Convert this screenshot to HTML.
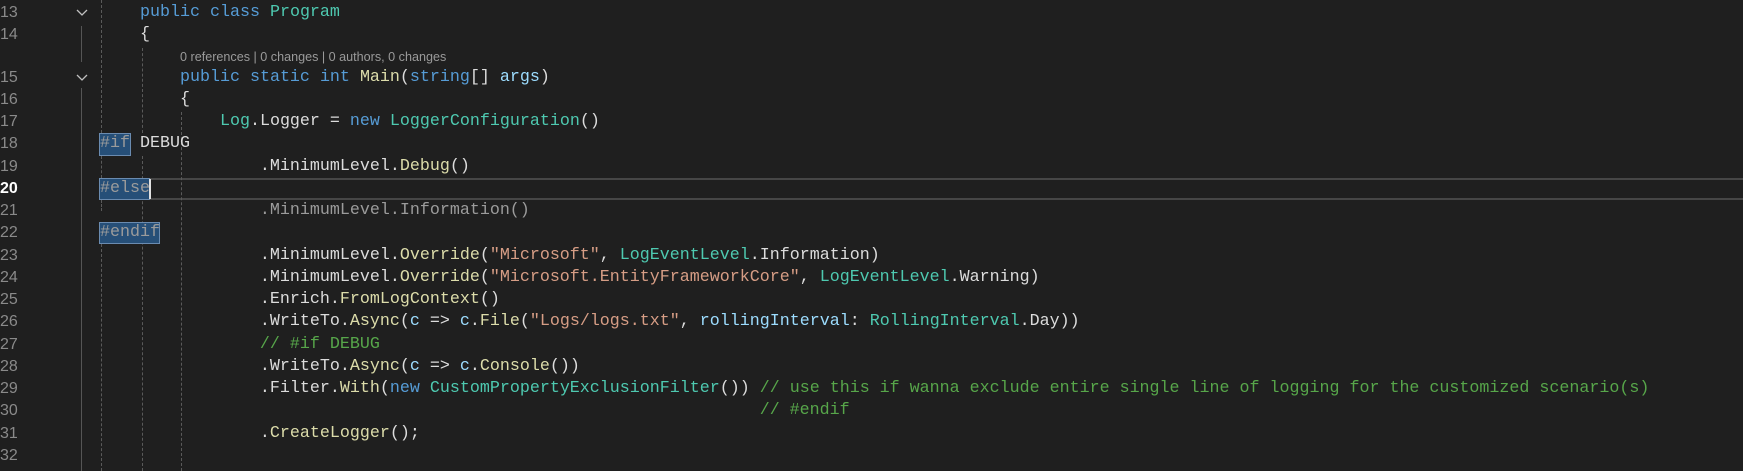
<!DOCTYPE html>
<html><head><meta charset="utf-8"><style>
html,body{margin:0;padding:0;background:#1f1f1f;width:1743px;height:471px;overflow:hidden}
.l{position:absolute;left:100px;height:22.24px;line-height:22.24px;font-family:"Liberation Mono",monospace;font-size:16.67px;color:#dcdcdc;white-space:pre}
.n{position:absolute;width:17px;text-align:right;left:0;height:22.24px;line-height:22.24px;font-family:"Liberation Sans",sans-serif;font-size:16px;color:#8a8a8a}
.k{color:#569cd6}.t{color:#4ec9b0}.m{color:#dcdcaa}.s{color:#d69d85}.c{color:#57a64a}.p{color:#9cdcfe}.g{color:#9b9b9b}
.guide{position:absolute;width:0;border-left:1px dashed #5a5a5a}
.box{position:absolute;background:#264f78;border:1px solid #6a8bb0;box-sizing:border-box}
</style></head><body>
<div style="position:absolute;left:150px;right:0;top:178px;height:22px;border-top:2px solid #464646;border-bottom:2px solid #464646;box-sizing:border-box"></div>
<div style="position:absolute;left:81px;top:26px;height:36px;width:1px;background:#555"></div>
<div style="position:absolute;left:81px;top:88px;height:383px;width:1px;background:#555"></div>
<svg style="position:absolute;left:76px;top:9px" width="12" height="8"><path d="M1 1 L6 6 L11 1" fill="none" stroke="#c0c0c0" stroke-width="1.3"/></svg>
<svg style="position:absolute;left:76px;top:74px" width="12" height="8"><path d="M1 1 L6 6 L11 1" fill="none" stroke="#c0c0c0" stroke-width="1.3"/></svg>
<div class="guide" style="left:101px;top:0;height:133px"></div>
<div class="guide" style="left:101px;top:156px;height:22px"></div>
<div class="guide" style="left:101px;top:200px;height:11px"></div>
<div class="guide" style="left:101px;top:244px;height:227px"></div>
<div class="guide" style="left:142px;top:48px;height:85px"></div>
<div class="guide" style="left:142px;top:156px;height:315px"></div>
<div class="guide" style="left:181px;top:112px;height:359px"></div>
<div class="box" style="left:99px;top:133px;width:32px;height:23px"></div>
<div class="box" style="left:99px;top:178px;width:51px;height:22px"></div>
<div style="position:absolute;left:149px;top:179px;width:2px;height:20px;background:#e0e0e0"></div>
<div class="box" style="left:99px;top:222px;width:61px;height:22px"></div>

<div class="n" style="top:2.2px">13</div>
<div class="n" style="top:24.4px">14</div>
<div class="n" style="top:66.7px">15</div>
<div class="n" style="top:88.9px">16</div>
<div class="n" style="top:111.2px">17</div>
<div class="n" style="top:133.4px">18</div>
<div class="n" style="top:155.6px">19</div>
<div class="n" style="top:177.9px;color:#fff;font-weight:bold">20</div>
<div class="n" style="top:200.1px">21</div>
<div class="n" style="top:222.4px">22</div>
<div class="n" style="top:244.6px">23</div>
<div class="n" style="top:266.8px">24</div>
<div class="n" style="top:289.1px">25</div>
<div class="n" style="top:311.3px">26</div>
<div class="n" style="top:333.6px">27</div>
<div class="n" style="top:355.8px">28</div>
<div class="n" style="top:378px">29</div>
<div class="n" style="top:400.3px">30</div>
<div class="n" style="top:422.5px">31</div>
<div class="n" style="top:444.8px">32</div>

<div class="l" style="top:2.2px">    <span class="k">public</span> <span class="k">class</span> <span class="t">Program</span></div>
<div class="l" style="top:24.4px">    {</div>
<div style="position:absolute;left:180px;top:46.7px;height:20px;line-height:20px;font-family:'Liberation Sans',sans-serif;font-size:12.6px;color:#9a9a9a;white-space:pre">0 references | 0 changes | 0 authors, 0 changes</div>
<div class="l" style="top:66.7px">        <span class="k">public</span> <span class="k">static</span> <span class="k">int</span> <span class="m">Main</span>(<span class="k">string</span>[] <span class="p">args</span>)</div>
<div class="l" style="top:88.9px">        {</div>
<div class="l" style="top:111.2px">            <span class="t">Log</span>.Logger = <span class="k">new</span> <span class="t">LoggerConfiguration</span>()</div>
<div class="l" style="top:133.4px"><span class="g">#if</span> DEBUG</div>
<div class="l" style="top:155.6px">                .MinimumLevel.<span class="m">Debug</span>()</div>
<div class="l" style="top:177.9px"><span class="g">#else</span></div>
<div class="l g" style="top:200.1px">                .MinimumLevel.Information()</div>
<div class="l" style="top:222.4px"><span class="g">#endif</span></div>
<div class="l" style="top:244.6px">                .MinimumLevel.<span class="m">Override</span>(<span class="s">"Microsoft"</span>, <span class="t">LogEventLevel</span>.Information)</div>
<div class="l" style="top:266.8px">                .MinimumLevel.<span class="m">Override</span>(<span class="s">"Microsoft.EntityFrameworkCore"</span>, <span class="t">LogEventLevel</span>.Warning)</div>
<div class="l" style="top:289.1px">                .Enrich.<span class="m">FromLogContext</span>()</div>
<div class="l" style="top:311.3px">                .WriteTo.<span class="m">Async</span>(<span class="p">c</span> =&gt; <span class="p">c</span>.<span class="m">File</span>(<span class="s">"Logs/logs.txt"</span>, <span class="p">rollingInterval</span>: <span class="t">RollingInterval</span>.Day))</div>
<div class="l c" style="top:333.6px">                // #if DEBUG</div>
<div class="l" style="top:355.8px">                .WriteTo.<span class="m">Async</span>(<span class="p">c</span> =&gt; <span class="p">c</span>.<span class="m">Console</span>())</div>
<div class="l" style="top:378px">                .Filter.<span class="m">With</span>(<span class="k">new</span> <span class="t">CustomPropertyExclusionFilter</span>()) <span class="c">// use this if wanna exclude entire single line of logging for the customized scenario(s)</span></div>
<div class="l c" style="top:400.3px">                                                                  // #endif</div>
<div class="l" style="top:422.5px">                .<span class="m">CreateLogger</span>();</div>
</body></html>
